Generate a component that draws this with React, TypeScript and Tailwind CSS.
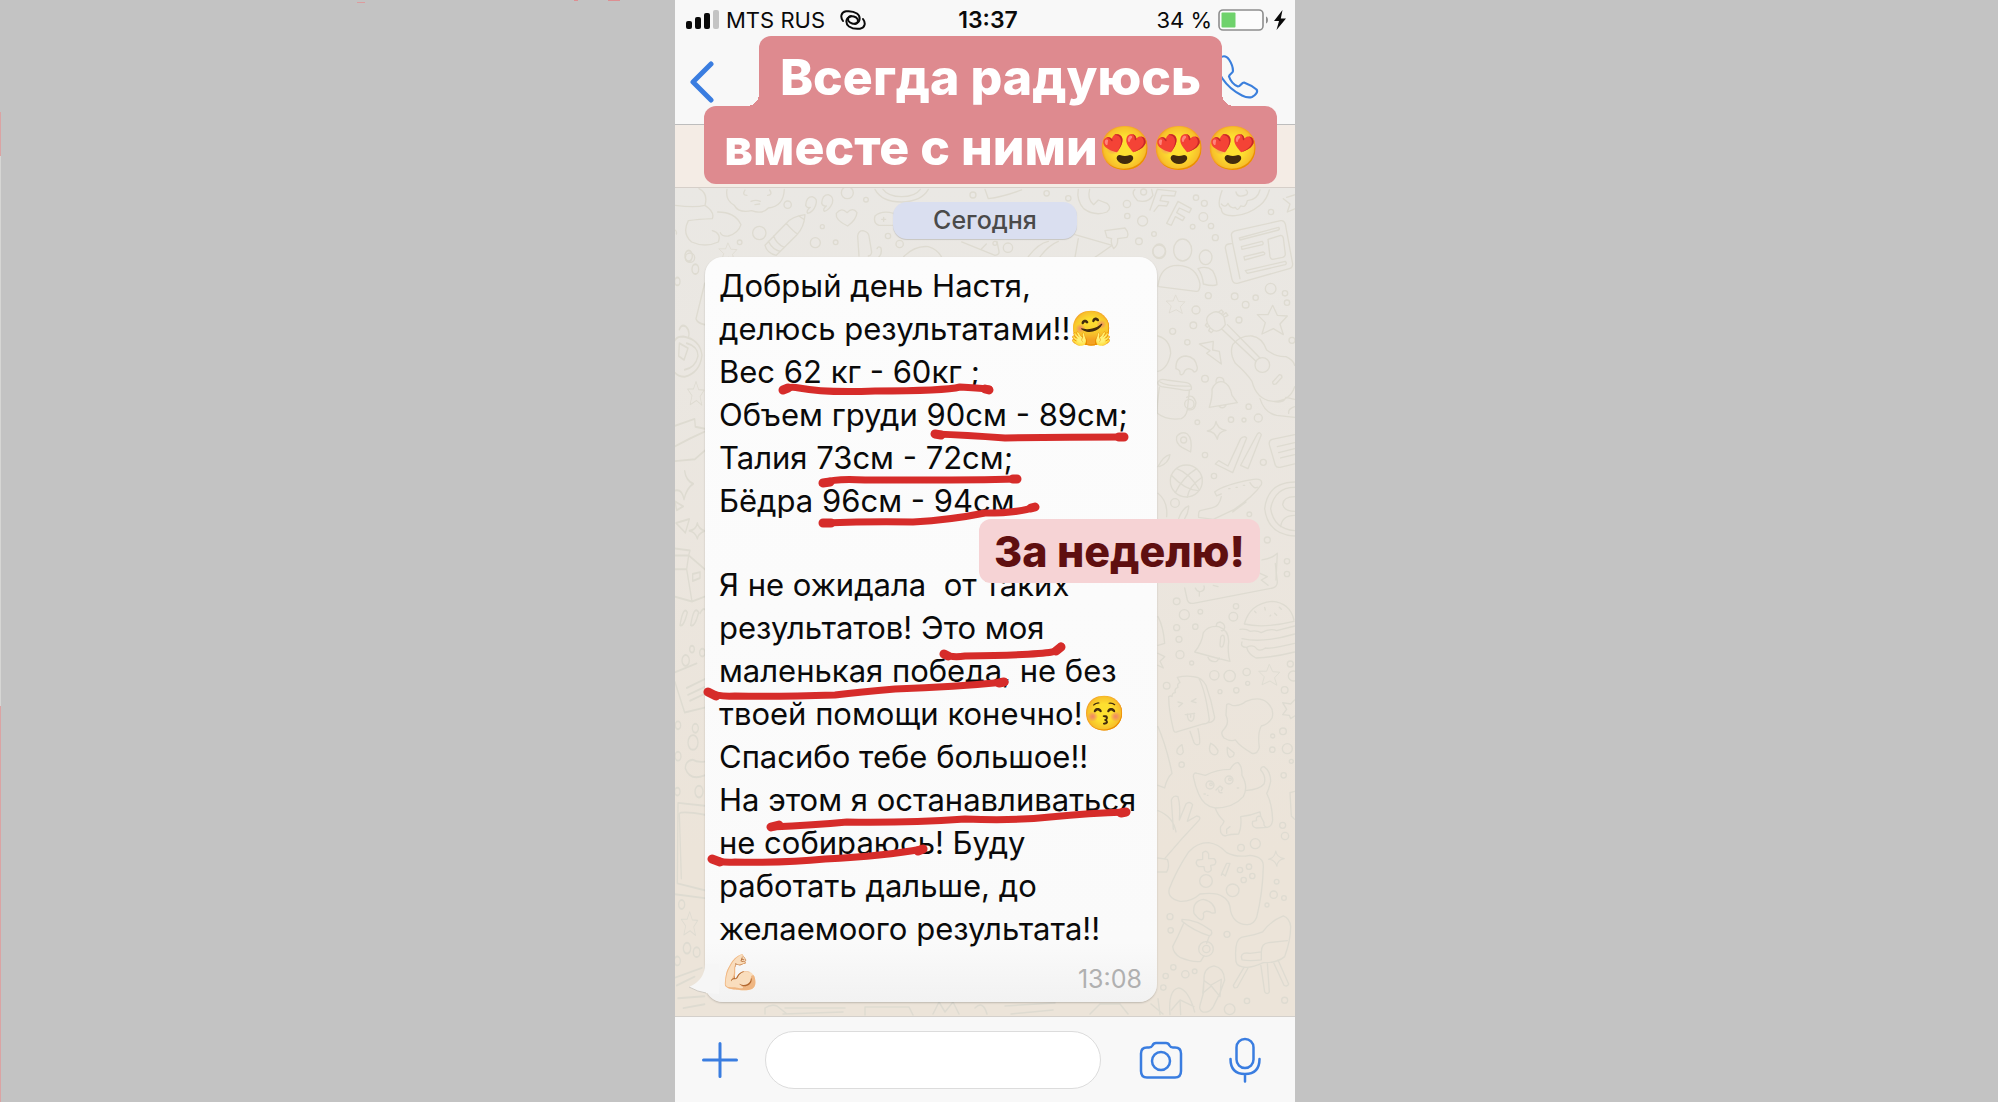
function SignalBars() {
  return (
    <svg width="33" height="20" viewBox="0 0 33 20" aria-hidden="true">
      <rect x="0" y="11" width="6" height="8" rx="2" fill="#0a0a0a" />
      <rect x="9" y="7" width="6" height="12" rx="2" fill="#0a0a0a" />
      <rect x="18" y="3" width="6" height="16" rx="2" fill="#0a0a0a" />
      <rect x="27" y="0" width="6" height="19" rx="2" fill="#c4c4c4" />
    </svg>
  );
}

function HotspotIcon() {
  return (
    <svg width="26" height="20" viewBox="0 0 26 20" fill="none" stroke="#0a0a0a" strokeWidth="2" strokeLinecap="round" aria-hidden="true">
      <path d="M3 11C0 7 1 2 6 1.300C10 .8 14 1.500 17 3.500C20.500 6 20.500 11 17 13C14 14.500 10 13.500 8.500 11C7.500 9 8.500 6.500 11 6" />
      <path d="M23 9C26 13 25 18 20 18.700C16 19.200 12 18.500 9 16.500C5.500 14 5.500 9 9 7C12 5.500 16 6.500 17.500 9C18.500 11 17.500 13.500 15 14" />
    </svg>
  );
}

function Battery() {
  return (
    <svg width="68" height="22" viewBox="0 0 68 22" aria-hidden="true">
      <rect x="1" y="1" width="44" height="20" rx="4" fill="#fcfcfc" stroke="#8d8d8d" strokeWidth="1.6" />
      <rect x="3.500" y="3.500" width="14" height="15" rx="1" fill="#6fd26c" />
      <path d="M48 7.500c2.600 .6 2.600 6.400 0 7z" fill="#8d8d8d" />
      <path d="M64.500 1L56 12h5l-2.500 9L68 9.500h-5.200z" fill="#0a0a0a" />
    </svg>
  );
}

function HandsetIcon() {
  return (
    <svg width="44" height="46" viewBox="0 0 44 46" fill="none" stroke="#3b7fdc" strokeWidth="2.200" strokeLinejoin="round" aria-hidden="true">
      <path d="M3 6C6 2.500 10 2 13 6.500C15 9.500 17 14 17 18C17 20 13.500 21 13 23.500C14.500 28 18 32 22 33.500C24.500 33.500 25.500 29.500 28 29.500C32 31 37 33.500 40.500 36.500C42.500 39 39 42.500 36 44C33 45 29 44 26 42.500C19 39 11 32.500 6 25C1 18 0 11 3 6z" />
    </svg>
  );
}

function Star({ x, y, r = 1 }: { x: number; y: number; r?: number }) {
  return (
    <path
      transform={`translate(${x} ${y}) scale(${r})`}
      d="M2-44L16-14L46-12L24 12L34 44L4 26L-30 42L-20 8L-44-16L-12-16z"
    />
  );
}

function Spark({ x, y, r = 1 }: { x: number; y: number; r?: number }) {
  return (
    <path transform={`translate(${x} ${y}) scale(${r})`} d="M-2-27Q2-4 28 0Q4 4 2 27Q-4 4-28 2Q-6-2-2-27z" />
  );
}

const upperDots = [
  [138, 53, 8], [163, 70, 9], [160, 111, 13], [183, 138, 8], [128, 140, 7], [196, 173, 9], [363, 96, 8], [12, 162, 7],
  [175, 347, 9], [254, 349, 10], [317, 353, 8], [287, 374, 10], [362, 326, 16], [405, 340, 8], [411, 368, 8],
  [138, 390, 12], [130, 436, 10], [68, 454, 9], [267, 420, 9], [112, 487, 8], [165, 596, 10], [426, 481, 9],
  [296, 680, 8], [325, 714, 12], [282, 720, 6], [243, 719, 8], [142, 727, 7], [165, 825, 8], [192, 888, 8],
  [340, 847, 9], [75, 969, 13], [298, 1003, 7], [352, 1080, 9], [411, 1144, 8], [411, 1182, 8],
];

const lowerDots = [
  [80, 124, 10], [103, 164, 15], [151, 155, 7], [80, 203, 9], [136, 200, 8], [87, 238, 9], [90, 284, 12], [258, 139, 8],
  [250, 170, 13], [125, 309, 6], [193, 346, 14], [239, 348, 17], [290, 336, 11], [293, 370, 6], [259, 391, 8],
  [210, 395, 6], [50, 377, 10], [421, 312, 9], [430, 348, 15], [404, 390, 10], [368, 528, 6], [399, 514, 10],
  [367, 569, 8], [412, 566, 15], [95, 614, 8], [401, 646, 8], [398, 796, 9], [405, 828, 11], [273, 863, 10],
  [316, 851, 15], [380, 965, 7], [371, 1004, 11], [402, 1014, 7], [351, 1035, 6], [60, 1070, 9], [62, 1111, 8],
  [231, 1123, 9], [70, 1222, 8], [47, 1248, 8], [106, 1243, 11], [134, 1234, 7], [40, 1283, 8], [239, 1348, 16],
  [291, 1323, 8], [404, 1321, 9], [424, 604, 6],
];

const topDots = [
  [338, 74, 11], [253, 159, 20], [421, 188, 15], [482, 187, 7], [442, 140, 6], [194, 187, 7], [45, 233, 14],
  [517, 38, 18], [573, 59, 7], [639, 168, 8], [674, 192, 11], [894, 45, 9], [1115, 40, 8], [1180, 55, 8],
  [1356, 72, 11], [1357, 108, 8], [1403, 123, 15], [1392, 184, 10], [1452, 214, 19], [999, 203, 14], [960, 190, 6],
];

const edgeDots = [
  [56, 12, 11], [76, 39, 10], [22, 64, 8], [66, 813, 7], [47, 836, 11], [97, 820, 8], [24, 968, 8], [69, 1003, 15],
  [76, 974, 9], [24, 1031, 9], [22, 1103, 8], [87, 1103, 12], [35, 1333, 9], [22, 1448, 9], [80, 1430, 10], [51, 1422, 11],
];

function Dots({ items }: { items: number[][] }) {
  return (
    <>
      {items.map(([cx, cy, r]) => (
        <circle key={`${cx}-${cy}`} cx={cx} cy={cy} r={r} />
      ))}
    </>
  );
}

/* Chat wallpaper with outline doodles */
function Wallpaper() {
  return (
    <svg className="pointer-events-none absolute left-0 top-0" width="620" height="828" viewBox="0 0 620 828" fill="none" stroke="#dedbd1" strokeWidth="4" strokeLinecap="round" strokeLinejoin="round" aria-hidden="true">
      <g transform="translate(475 -8) scale(.3333)">
        <Dots items={upperDots} />
        <path d="M0 90L22 28L78 34L74 48L36 46L30 62L56 66L50 78L26 76L12 94M50 130L84 64L124 86L118 98L88 84L80 98L104 112L98 122L76 110L64 136z" />
        <path d="M216 32Q200 76 214 86Q214 110 256 107Q296 104 330 76Q350 60 358 30M214 72Q226 86 234 70Q242 88 256 82Q262 96 272 78Q288 84 292 62Q322 60 330 30M258 36q4 20 32 8q6-8-2-14" />
        <path d="M400 56l20 16-8 24 24-10M436 44l-26 8" />
        <path d="M258 152L392 122Q402 120 406 132L428 252Q428 264 418 266L262 310Q250 312 246 298L226 204Q226 194 236 192L248 190L270 296M248 190L244 164Q246 154 258 152M268 174l118-32q4 4 0 8l-116 30zM274 200l62-16q6 4 2 10l-62 14zM282 230l58-14q8 4 2 8l-58 16zM286 272l120-28q6 6 0 10l-114 26zM354 178l38-12q6 0 8 8l6 48q0 8-8 10l-30 6q-6 0-8-8z" />
        <ellipse cx="98" cy="210" rx="27" ry="33" />
        <ellipse cx="28" cy="214" rx="19" ry="22" />
        <ellipse cx="167" cy="232" rx="19" ry="22" />
        <path d="M24 318Q30 256 84 256Q140 258 150 312Q150 336 138 334L26 320M144 266Q170 256 188 272Q200 294 201 314Q190 320 160 312Q158 286 144 266" />
        <Star x={76} y={373} r={0.62} />
        <Star x={366} y={420} />
        <path d="M148 492L190 484L188 510L208 514L214 552L170 520L180 512z" />
        <path d="M78 566Q76 530 108 528Q136 530 142 562Q142 576 132 576Q128 568 116 566Q104 568 102 578Q96 588 90 582Q92 570 78 566z" />
        <path d="M184 400Q200 390 214 402L222 410L226 434Q210 458 192 452Q172 440 170 420Q170 408 184 400zM206 396l8-6 6 6-6 6M220 404l8-6 6 8-8 4M170 430l-4 6 6 6 6-4M180 444l-4 8 8 6 6-6M216 448L318 544M232 434L330 534" />
        <path d="M248 494Q270 466 306 468Q336 472 350 510Q380 532 408 530Q430 540 434 556M248 494Q238 520 256 550Q290 580 306 604Q320 660 370 664Q420 664 434 620M330 656Q344 700 380 706L434 712M370 664Q400 672 408 652L434 658M368 606L388 584Q396 584 396 592L378 612Q368 616 368 606zM434 680q-20 6-18 20" />
        <circle cx="337" cy="555" r="22" />
        <path d="M24 606Q30 594 50 600L110 608Q126 612 124 628Q110 634 90 628L34 620Q22 616 24 606zM30 606Q50 620 120 618M28 622Q20 680 22 700Q50 722 94 716Q108 710 112 690L118 632M110 652Q130 640 138 668Q134 696 112 688" />
        <circle cx="118" cy="672" r="14" />
        <path d="M178 682Q188 650 186 628Q198 600 220 606Q240 614 246 646L262 668Q226 674 178 682zM198 606q0-14 10-14q14 0 14 14M208 680q12 8 20-4" />
        <Spark x={200} y={751} />
        <path d="M122 816Q128 776 112 762Q94 752 80 770Q76 790 96 802z" />
        <circle cx="101" cy="780" r="9" />
        <path d="M196 852L206 842L234 858L272 776Q282 766 290 774L248 878zM272 856L322 762Q330 754 334 764L294 866zL272 856" />
        <path d="M434 764L366 778Q356 782 358 794L376 856Q380 864 390 862L434 852M382 800l52-12M386 818l48-12M392 834l42-10" />
        <circle cx="109" cy="903" r="48" />
        <path d="M80 866Q120 880 148 930M64 886Q104 930 144 932M76 938Q100 890 140 866M112 952Q116 920 156 892" />
        <path d="M194 936Q220 914 310 898Q340 894 334 914Q310 950 250 990L190 1018L146 1012Q144 996 150 992L186 984Q208 980 214 950M194 936l6 12 14-6M248 996l40-30M236 926h4M258 922h4M280 916h4M300 908q12 20 22 14" />
        <path d="M434 906Q354 906 344 986Q354 1064 434 1068M434 922Q374 922 362 986Q372 1048 434 1052M434 950q-34 0-36 24q6 20 36 20M392 1040q4-34 42-34" />
        <path d="M24 940Q54 964 50 1010M28 860Q56 850 60 824Q40 828 24 860M24 468Q60 478 62 520Q54 566 24 574M86 1016q10-30 30-38q0 20-12 38M336 1140q30-4 46-20l-4 80" />
      </g>
      <g transform="translate(475 372) scale(.3333)">
        <Dots items={lowerDots} />
        <path d="M104 84L112 120Q116 132 130 130L368 84Q382 80 382 66L376 10M136 84q6 14 18 10q12-4 8-16M148 96v12M190 76l14 4M330 40l22 10-18 10 20 16" />
        <path d="M283 192Q300 130 366 124Q420 128 432 180M283 192Q340 206 432 184M270 208Q290 206 300 214Q320 210 334 218Q360 204 380 212L434 198M276 236Q340 250 434 222M276 246Q270 262 290 262Q294 282 318 294Q370 292 434 276M290 262Q310 252 320 266Q330 276 346 264Q360 268 434 250M314 154l4 4M344 142l2 8M374 160l6 6M388 142l6 6M362 166l-2 2" />
        <path d="M134 276Q156 250 160 218Q176 196 206 200Q236 210 236 244Q232 278 240 304Q190 292 134 276zM200 200q-4-12 10-14q14 4 14 16q-2 12-10 10M174 292q6 16 26 12l8-10M212 232q4-10 10-4q4 16-4 32q-8 4-8-6z" />
        <Star x={357} y={345} r={0.7} />
        <path d="M82 352Q116 344 146 354Q166 390 178 480Q176 492 160 492L80 516Q72 518 70 508Q56 450 56 410Q62 406 66 410Q66 398 76 398Q72 386 84 382Q80 370 90 368zM130 350Q156 352 168 376Q184 420 194 472Q192 486 176 488M120 514L132 548Q138 558 148 552Q152 546 144 506M84 426l14 4-12 10M138 416l-14 8 14 4M106 464q10-2 28-4M112 462q0 20 12 22q10-4 8-24M122 464v8" />
        <path d="M230 434Q234 428 246 436Q270 440 288 424Q330 408 352 428Q374 448 366 474Q356 492 334 498Q322 520 328 562Q322 584 306 580Q270 560 256 540Q242 546 222 534Q210 520 220 510Q240 490 228 466z" />
        <path d="M96 554Q76 566 82 580Q94 590 100 576zM182 550Q172 576 190 584Q204 586 204 572Q196 556 182 550zM232 562Q230 586 240 592Q254 590 252 578zM434 420l-12 12-24-4 12 20-12 16 20 2 4 10 12-8" />
        <path d="M146 702Q136 680 130 650Q130 636 142 640L166 646Q200 628 240 628Q254 606 264 608Q276 616 276 646Q296 680 280 710Q250 744 196 744Q162 740 146 702zM286 692Q330 688 342 672Q350 650 332 630Q332 620 342 620Q362 634 362 664Q356 690 350 700Q366 730 368 780Q366 800 352 802Q340 800 342 788L332 768Q316 768 320 782L308 784Q304 800 318 804L352 802M196 744Q200 762 222 784Q220 792 212 800Q208 826 226 828Q240 822 266 822Q276 800 272 770Q300 768 330 756L332 768M240 800l-10 8v12M206 690q0 10 10 8M198 690l12-12 8 6-4 8M162 702h4M172 706h2M262 684h4" />
        <circle cx="180" cy="675" r="12" />
        <circle cx="237" cy="660" r="12" />
        <circle cx="183" cy="673" r="4" />
        <circle cx="240" cy="658" r="4" />
        <path d="M70 808L64 720Q70 704 84 710Q92 740 88 780L108 732Q118 722 128 734L112 784L140 768Q156 770 146 782L96 836M24 752Q70 770 78 816M96 836L44 896M24 894L52 898Q60 918 50 936L24 936" />
        <path d="M58 986Q80 930 116 876Q140 848 176 848Q206 852 230 878Q260 894 300 886Q342 890 340 920Q338 1000 320 1072Q310 1096 290 1094Q252 1092 242 1054Q240 1020 218 1010Q200 996 150 1002Q124 1026 90 1024Q50 1014 58 986zM158 878q12-10 18 4v14l16 0q10 8 2 18l-12 2 2 14q-10 12-20 2l-2-12-16 0q-12-8-4-20l16-2zM216 940l14-30 10 0-14 38zl-2 6" />
        <circle cx="168" cy="963" r="19" />
        <circle cx="248" cy="991" r="19" />
        <circle cx="297" cy="920" r="8" />
        <circle cx="270" cy="930" r="8" />
        <circle cx="307" cy="948" r="8" />
        <circle cx="281" cy="960" r="8" />
        <Spark x={379} y={896} r={0.85} />
        <path d="M132 1060Q126 1024 160 1018Q196 1026 196 1058Q186 1062 180 1056Q164 1050 160 1060Q164 1076 154 1080Q144 1076 132 1060zM96 1078Q140 1078 184 1112Q188 1124 178 1128Q130 1112 96 1084zM100 1092Q84 1130 68 1160Q70 1180 90 1192Q130 1208 152 1204L162 1188M178 1128L170 1150" />
        <circle cx="168" cy="1167" r="22" />
        <circle cx="169" cy="1167" r="11" />
        <path d="M258 1206Q252 1140 274 1132Q320 1124 338 1116Q360 1084 400 1068Q420 1076 422 1100Q422 1140 404 1190Q380 1210 340 1208Q310 1222 290 1222Q262 1222 258 1206zM274 1190Q276 1176 300 1180L334 1176V1200Q300 1204 276 1200zM334 1176Q334 1150 356 1148L412 1142M282 1222L250 1276Q252 1288 262 1282L294 1224M332 1212L344 1296Q352 1306 358 1296L352 1208M370 1206L402 1276Q412 1282 416 1272L384 1200" />
        <path d="M162 1260Q160 1224 192 1218Q222 1224 224 1260Q212 1300 190 1340Q178 1360 158 1356Q146 1350 150 1336L160 1300zM158 1300L162 1262L182 1276L214 1258L210 1310L184 1278zM60 1364Q54 1290 86 1284Q116 1290 134 1356M64 1350L90 1320L132 1340M90 1320L92 1364M24 1316L30 1364" />
        <path d="M24 500Q50 560 66 640Q50 656 44 684L24 676M24 170Q40 200 44 250L24 256M434 694l-14 4 4 70 10 10M24 280l20 10-14 14 10 20-16-8" />
      </g>
      <g transform="translate(0 -8) scale(.3333)">
        <Dots items={topDots} />
        <path d="M72 26Q100 40 90 76Q60 84 0 76M90 76Q120 96 112 116Q70 118 40 122Q20 160 50 186Q90 204 130 186Q140 160 112 152M128 96Q180 96 198 134Q190 160 160 168Q140 170 136 158M0 150q6 4 4 12" />
        <path d="M156 28Q150 60 178 76Q190 100 230 92Q262 104 280 84Q326 80 328 28M228 64q14-6 28 0M240 74l14-2M210 30q-10 16 6 16M284 30q10 14-6 16" />
        <path d="M392 76q2-26 20-26q18 6 10 26q-8 22-24 24q-6-6 8-18q-10 4-14-6zM440 70q2-26 20-26q18 6 12 26q-10 22-24 24q-6-6 6-16q-10 2-14-8z" />
        <path d="M390 104Q350 110 334 130L270 196Q276 220 304 226L366 164Q388 140 390 104zM334 130q20 24 34 32M296 168q8 24 32 34M280 184q14 26 36 30M372 108l14 10" />
        <path d="M518 138Q480 120 484 100Q500 80 516 98Q534 80 546 98Q544 120 518 138z" />
        <Star x={158} y={216} r={0.6} />
        <path d="M656 100Q620 90 600 108Q594 130 612 136L656 136M626 112v12M620 118h12M548 168Q550 152 564 152Q580 156 582 168L590 216Q590 226 580 228M548 168L552 228M606 206Q610 196 618 204Q622 220 612 230" />
        <path d="M600 28Q620 66 680 66Q740 64 760 28M624 28Q640 50 680 50Q720 50 736 28M930 28L940 56Q980 52 1040 30M686 230Q720 196 760 200Q790 210 800 232" />
        <path d="M1210 28Q1204 60 1226 86Q1260 110 1296 96Q1312 84 1296 70L1270 60L1256 74Q1236 58 1244 28M1380 28Q1366 40 1388 62Q1420 70 1434 46L1430 28" />
        <circle cx="1406" cy="36" r="9" />
        <path d="M1290 152L1350 144Q1364 160 1356 172L1328 176Q1330 196 1316 206Q1306 190 1310 176L1296 172zM1200 164L1312 196L1260 232M1210 176L1200 232M1060 230Q1090 190 1120 184M1094 232Q1120 196 1150 184M860 186L960 226Q974 224 972 214L966 184M920 206l14-14" />
      </g>
      <g transform="translate(-5 62) scale(.3333 .491)">
        <Dots items={edgeDots} />
        <path d="M104 68L78 140Q80 148 104 152M15 184Q20 176 40 176Q90 182 96 214Q90 250 44 258Q24 258 15 250M28 162Q34 150 48 156Q60 164 56 176M28 190L54 200L42 224L26 216zM50 190Q84 196 84 216Q76 240 44 244" />
        <Star x={77} y={292} r={0.55} />
        <path d="M15 358L74 344L76 360L104 364M15 400L60 384L104 370M15 430l60-4 30-18M44 450Q48 470 70 476Q50 484 42 508Q36 486 15 490M15 512L40 522L20 530zM18 556L58 548L46 576zM82 556Q86 568 104 572Q84 578 82 588Q76 574 58 572Q78 570 82 556z" />
        <path d="M15 608L60 612L56 622M15 622L56 622L104 650M56 622L50 650L66 716L104 706M15 650L50 650M66 716L15 706M68 660l22-4v12l-22 6zM30 764Q40 724 52 738Q40 770 30 764zM62 764Q72 722 86 738Q74 770 62 764M90 740q10-12 14-8" />
        <path d="M15 880L44 942L104 932M15 860L80 842M50 892L104 874M54 906L104 890M60 918L104 904M104 1042Q80 1044 68 1038Q46 1040 46 1056Q60 1082 104 1070M104 1132L24 1126L22 1290L104 1304M34 1280L28 1148Q34 1142 104 1150M15 1312L104 1320" />
        <Star x={58} y={1372} r={0.55} />
        <path d="M15 1482L96 1462M20 1498L74 1480M24 1524L104 1520M40 1544l64-8" />
      </g>
      <path d="M90 826v-6q6-4 12-2l10 8M110 820h60M108 826l60-2M190 827v-8h44l4 8M258 826l6-12 6 10 8-10 6 12M330 818l50-3M336 826l42-4M415 826l10-10h20l8 10M476 816l12 10M300 820q8-8 12 6" strokeWidth="1.500" />
    </svg>
  );
}

/* Hand drawn red marker lines */
function MarkerLines() {
  return (
    <svg className="pointer-events-none absolute left-0 top-0" width="620" height="828" viewBox="0 0 620 828" fill="none" stroke="#d62c2a" strokeWidth="7" strokeLinecap="round" strokeLinejoin="round" aria-hidden="true">
      <path d="M108 202Q114 198 124 200Q150 205 200 203Q270 203 285 199Q302 200 314 201" />
      <path d="M108 202l5-2M310 201l4 1" strokeWidth="9" />
      <path d="M260 246Q290 247 330 250Q390 249 448 249" />
      <path d="M260 246l6 1M444 249l5 0" strokeWidth="9" />
      <path d="M148 295Q160 290 190 292L275 292Q310 292 342 291" />
      <path d="M148 295l7-1M338 291l4 0" strokeWidth="9" />
      <path d="M148 335Q200 333 238 334Q275 332 310 325Q345 325 360 319" />
      <path d="M148 335l8 0M356 320l4-1" strokeWidth="9" />
      <path d="M269 466Q276 470 290 468Q360 467 377 464Q384 463 386 458" />
      <path d="M269 466l4 2M381 463l5-4" strokeWidth="9" />
      <path d="M33 504Q42 509 60 508Q100 509 160 507Q185 504 220 501Q280 499 330 494" />
      <path d="M33 504l8 4M324 495l5-1" strokeWidth="9" />
      <path d="M96 639Q140 637 172 634Q230 635 290 631Q340 633 375 629Q415 625 451 624" />
      <path d="M96 639l8-2M446 625l5-1" strokeWidth="9" />
      <path d="M37 671Q45 675 60 674Q110 675 150 671Q210 668 247 661" />
      <path d="M37 671l8 3M243 663l5-2" strokeWidth="9" />
    </svg>
  );
}

function Emoji({ children }: { children: string }) {
  return <span className="text-[34px] leading-none">{children}</span>;
}

function TitleSticker() {
  return (
    <h1 className="absolute left-[29px] top-9 z-20 flex w-[573px] flex-col items-center text-[50px] font-extrabold text-white">
      <span className="relative flex h-[70px] w-[463px] items-center justify-center whitespace-nowrap rounded-t-xl bg-[#de8a8f] pt-3">
        Всегда радуюсь
        <i className="absolute -left-3 bottom-0 size-3 bg-[radial-gradient(circle_at_0_0,transparent_12px,#de8a8f_12px)]" />
        <i className="absolute -right-3 bottom-0 size-3 bg-[radial-gradient(circle_at_100%_0,transparent_12px,#de8a8f_12px)]" />
      </span>
      <span className="flex h-[78px] w-full items-center whitespace-nowrap rounded-xl bg-[#de8a8f] pl-5 pt-1">
        вместе с ними<span className="text-[43px] leading-none">😍😍😍</span>
      </span>
    </h1>
  );
}

export default function App() {
  return (
    <div className="relative grid min-h-screen grid-cols-[675fr_minmax(620px,620fr)_703fr] overflow-hidden bg-[#c3c3c3] font-['Inter',sans-serif] text-[#0a0a0a]">
      <div aria-hidden="true" className="relative">
        <i className="absolute left-0 top-28 h-11 w-px bg-[#dba3a3]" />
        <i className="absolute left-0 top-[156px] h-[550px] w-px bg-[#d6d6d4]" />
        <i className="absolute bottom-0 left-0 top-[706px] w-px bg-[#dba3a3]" />
        <i className="absolute left-[357px] top-0.5 h-px w-2 bg-[#dd9c9e]" />
        <i className="absolute left-[574px] top-0 h-px w-1 bg-[#dd8f92]" />
        <i className="absolute left-[608px] top-0 h-px w-3 bg-[#dd8f92]" />
      </div>

      <main className="relative flex min-h-screen flex-col bg-[#f8f8f8]">
        <div className="grid h-10 grid-cols-3 items-center pl-[11px] pr-[9px] text-[22px]">
          <div className="flex items-center gap-[7px] whitespace-nowrap">
            <SignalBars />
            <span>MTS RUS</span>
            <span className="pl-2"><HotspotIcon /></span>
          </div>
          <time className="pl-1 text-center text-[23px] font-semibold">13:37</time>
          <div className="flex items-center justify-end gap-[6px] whitespace-nowrap">
            <span>34 %</span>
            <Battery />
          </div>
        </div>

        <header className="flex h-[85px] items-center justify-between border-b border-[#bdbdbd] pl-[14px] pr-[35px]">
          <button type="button" aria-label="Назад">
            <svg width="26" height="42" viewBox="0 0 26 42" fill="none" stroke="#3a7de0" strokeWidth="5" strokeLinecap="round" strokeLinejoin="round">
              <path d="M22 3L4 21L22 39" />
            </svg>
          </button>
          <button type="button" aria-label="Позвонить" className="pb-3">
            <HandsetIcon />
          </button>
        </header>

        <TitleSticker />

        <div className="h-[63px] border-b border-[#d6cfc9] bg-[#f4ece5]" />

        <section className="relative flex flex-1 flex-col items-start bg-[linear-gradient(180deg,#eae8e4_0%,#ebe6df_40%,#ece4d9_80%)] pb-[14px] pt-[14px]">
          <Wallpaper />
          <div className="relative flex h-[37px] w-[184px] items-center justify-center self-center rounded-[14px] bg-[#dadff0] text-[25px] font-medium text-[#4a4a4a] shadow-[0_1px_1px_rgba(0,0,0,0.15)]">
            Сегодня
          </div>

          <article className="relative ml-[30px] mt-[18px] w-[452px] rounded-[18px] bg-[linear-gradient(180deg,#fcfcfc_0%,#fafafa_92%,#f2f2f2_100%)] pb-[9px] pl-[14px] pr-[15px] pt-[7px] shadow-[0_1px_2px_rgba(0,0,0,0.2)]">
            <svg className="absolute -left-4 bottom-0" width="30" height="38" viewBox="0 0 30 38" aria-hidden="true">
              <path d="M16 0Q16 16 0 23Q9 28 17 29L30 30V0z" fill="#f6f6f6" />
              <path d="M0 23Q9 28 17 29" fill="none" stroke="#cfcac3" strokeWidth="1" />
            </svg>
            <div className="relative text-[31px] leading-[43px]">
              <p className="whitespace-pre">
                Добрый день Настя,<br />
                делюсь результатами!!<Emoji>🤗</Emoji><br />
                Вес 62 кг - 60кг ;<br />
                Объем груди 90см - 89см;<br />
                Талия 73см - 72см;<br />
                Бёдра 96см - 94см.
              </p>
              <p className="mt-[41px] whitespace-pre">
                {"Я не ожидала  от таких"}<br />
                результатов! Это моя<br />
                маленькая победа, не без<br />
                твоей помощи конечно!<Emoji>😚</Emoji><br />
                Спасибо тебе большое!!<br />
                На этом я останавливаться<br />
                не собираюсь! Буду<br />
                работать дальше, до<br />
                желаемоого результата!!
              </p>
              <div className="flex h-[43px] items-center justify-between">
                <Emoji>💪🏻</Emoji>
                <time className="pt-4 text-[25px] leading-none text-[#b0b0b0]">13:08</time>
              </div>
            </div>
          </article>

          <MarkerLines />

          <div className="absolute right-[35px] top-[331px] flex h-16 w-[281px] items-center justify-center whitespace-nowrap rounded-xl bg-[#f6d3d5] text-[43px] font-extrabold text-[#5f0f10]">
            За неделю!
          </div>
        </section>

        <footer className="flex h-[86px] items-center border-t border-[#d4d0cb] bg-[#f8f8f8] pl-[27px] pr-[34px]">
          <button type="button" aria-label="Прикрепить">
            <svg width="36" height="36" viewBox="0 0 36 36" stroke="#3a7de0" strokeWidth="3" strokeLinecap="round">
              <path d="M18 1.500V34.500M1.500 18H34.500" />
            </svg>
          </button>
          <input type="text" aria-label="Сообщение" className="ml-[27px] mr-[38px] h-[58px] min-w-0 flex-1 rounded-full border border-[#dcdcdc] bg-white px-6 text-[28px] outline-none" />
          <button type="button" aria-label="Камера" className="mr-[46px]">
            <svg width="44" height="38" viewBox="0 0 44 38" fill="none" stroke="#3a7de0" strokeWidth="2.500" strokeLinejoin="round">
              <path d="M8 6.500H10Q12.500 6.500 13.500 4.500Q14.500 2 17 2H27Q29.500 2 30.500 4.500Q31.500 6.500 34 6.500H36Q42 6.500 42 12.500V30Q42 36.500 36 36.500H8Q2 36.500 2 30V12.500Q2 6.500 8 6.500z" />
              <circle cx="22" cy="20" r="9" />
            </svg>
          </button>
          <button type="button" aria-label="Голосовое сообщение">
            <svg width="32" height="46" viewBox="0 0 32 46" fill="none" stroke="#3a7de0" strokeWidth="2.500" strokeLinecap="round">
              <rect x="7.500" y="2" width="17" height="29" rx="8.500" />
              <path d="M1.500 22Q1.500 37 16 37Q30.500 37 30.500 22M16 37V44.500" />
            </svg>
          </button>
        </footer>
      </main>

      <div aria-hidden="true" />
    </div>
  );
}
